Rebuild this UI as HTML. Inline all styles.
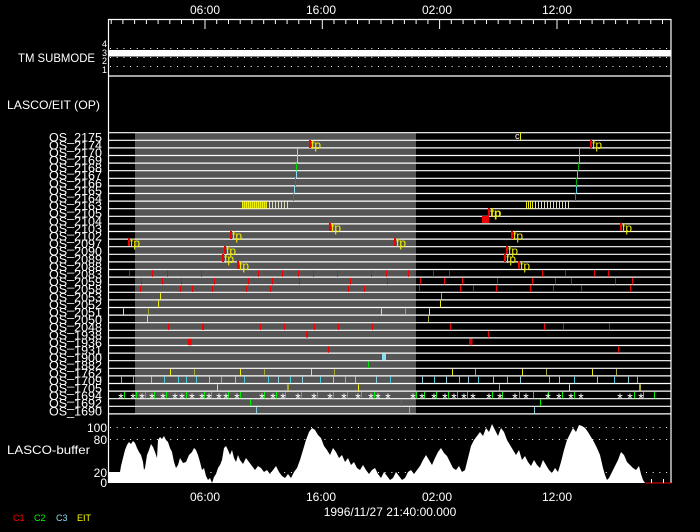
<!DOCTYPE html>
<html><head><meta charset="utf-8"><style>
html,body{margin:0;padding:0;background:#000;}
svg{display:block;font-family:"Liberation Sans",sans-serif;}
</style></head><body>
<svg width="700" height="532" viewBox="0 0 700 532" xmlns="http://www.w3.org/2000/svg">
<rect width="700" height="532" fill="#000"/>
<rect x="135" y="132.7" width="281" height="281" fill="#555"/>
<line x1="108.5" y1="19" x2="108.5" y2="483" stroke="#fff" stroke-width="1.2"/>
<line x1="671" y1="19" x2="671" y2="483" stroke="#fff" stroke-width="1.2"/>
<line x1="108" y1="19.5" x2="671" y2="19.5" stroke="#fff" stroke-width="1.2"/>
<line x1="108" y1="76" x2="671" y2="76" stroke="#fff" stroke-width="1.2"/>
<g stroke="#fff" stroke-width="1">
<line x1="111.2" y1="19" x2="111.2" y2="24"/><line x1="122.9" y1="19" x2="122.9" y2="24"/><line x1="134.6" y1="19" x2="134.6" y2="24"/><line x1="146.4" y1="19" x2="146.4" y2="24"/><line x1="158.1" y1="19" x2="158.1" y2="24"/><line x1="169.8" y1="19" x2="169.8" y2="24"/><line x1="181.5" y1="19" x2="181.5" y2="24"/><line x1="193.3" y1="19" x2="193.3" y2="24"/><line x1="205" y1="19" x2="205" y2="29"/><line x1="216.7" y1="19" x2="216.7" y2="24"/><line x1="228.5" y1="19" x2="228.5" y2="24"/><line x1="240.2" y1="19" x2="240.2" y2="24"/><line x1="251.9" y1="19" x2="251.9" y2="24"/><line x1="263.7" y1="19" x2="263.7" y2="24"/><line x1="275.4" y1="19" x2="275.4" y2="24"/><line x1="287.1" y1="19" x2="287.1" y2="24"/><line x1="298.8" y1="19" x2="298.8" y2="24"/><line x1="310.6" y1="19" x2="310.6" y2="24"/><line x1="322.3" y1="19" x2="322.3" y2="29"/><line x1="334" y1="19" x2="334" y2="24"/><line x1="345.8" y1="19" x2="345.8" y2="24"/><line x1="357.5" y1="19" x2="357.5" y2="24"/><line x1="369.2" y1="19" x2="369.2" y2="24"/><line x1="381" y1="19" x2="381" y2="24"/><line x1="392.7" y1="19" x2="392.7" y2="24"/><line x1="404.4" y1="19" x2="404.4" y2="24"/><line x1="416.1" y1="19" x2="416.1" y2="24"/><line x1="427.9" y1="19" x2="427.9" y2="24"/><line x1="439.6" y1="19" x2="439.6" y2="29"/><line x1="451.3" y1="19" x2="451.3" y2="24"/><line x1="463.1" y1="19" x2="463.1" y2="24"/><line x1="474.8" y1="19" x2="474.8" y2="24"/><line x1="486.5" y1="19" x2="486.5" y2="24"/><line x1="498.2" y1="19" x2="498.2" y2="24"/><line x1="510" y1="19" x2="510" y2="24"/><line x1="521.7" y1="19" x2="521.7" y2="24"/><line x1="533.4" y1="19" x2="533.4" y2="24"/><line x1="545.2" y1="19" x2="545.2" y2="24"/><line x1="557" y1="19" x2="557" y2="29"/><line x1="568.6" y1="19" x2="568.6" y2="24"/><line x1="580.4" y1="19" x2="580.4" y2="24"/><line x1="592.1" y1="19" x2="592.1" y2="24"/><line x1="603.8" y1="19" x2="603.8" y2="24"/><line x1="615.6" y1="19" x2="615.6" y2="24"/><line x1="627.3" y1="19" x2="627.3" y2="24"/><line x1="639" y1="19" x2="639" y2="24"/><line x1="650.8" y1="19" x2="650.8" y2="24"/><line x1="662.5" y1="19" x2="662.5" y2="24"/>
</g>
<g stroke="#fff" stroke-width="1" stroke-dasharray="1 5.7">
<line x1="110" y1="48.5" x2="671" y2="48.5"/><line x1="110" y1="57.5" x2="671" y2="57.5"/><line x1="110" y1="66.5" x2="671" y2="66.5"/>
</g>
<rect x="108" y="50" width="563" height="6.5" fill="#fff"/>
<g fill="#fff" font-size="9" text-anchor="end">
<text x="107" y="47">4</text><text x="107" y="56">3</text><text x="107" y="64">2</text><text x="107" y="73">1</text>
</g>
<text x="95" y="62" fill="#fff" font-size="12" text-anchor="end" textLength="77" lengthAdjust="spacingAndGlyphs">TM SUBMODE</text>
<text x="100" y="109" fill="#fff" font-size="12" text-anchor="end" textLength="93" lengthAdjust="spacingAndGlyphs">LASCO/EIT (OP)</text>
<g fill="#fff" font-size="12" text-anchor="middle">
<text x="205" y="14">06:00</text><text x="321" y="14">16:00</text><text x="437" y="14">02:00</text><text x="557" y="14">12:00</text>
<text x="205" y="501">06:00</text><text x="321" y="501">16:00</text><text x="437" y="501">02:00</text><text x="557" y="501">12:00</text>
<text x="390" y="516">1996/11/27 21:40:00.000</text>
</g>
<g font-size="9">
<text x="13" y="521" fill="#f00">C1</text><text x="34" y="521" fill="#0f0">C2</text><text x="56" y="521" fill="#8de">C3</text><text x="77" y="521" fill="#ff0">EIT</text>
</g>
<g stroke="#fff" stroke-width="1.2">
<line x1="108" x2="671" y1="132.7" y2="132.7"/><line x1="108" x2="671" y1="140.3" y2="140.3"/><line x1="108" x2="671" y1="147.9" y2="147.9"/><line x1="108" x2="671" y1="155.5" y2="155.5"/><line x1="108" x2="671" y1="163.1" y2="163.1"/><line x1="108" x2="671" y1="170.7" y2="170.7"/><line x1="108" x2="671" y1="178.3" y2="178.3"/><line x1="108" x2="671" y1="185.9" y2="185.9"/><line x1="108" x2="671" y1="193.5" y2="193.5"/><line x1="108" x2="671" y1="201.1" y2="201.1"/><line x1="108" x2="671" y1="208.7" y2="208.7"/><line x1="108" x2="671" y1="216.3" y2="216.3"/><line x1="108" x2="671" y1="223.9" y2="223.9"/><line x1="108" x2="671" y1="231.5" y2="231.5"/><line x1="108" x2="671" y1="239.1" y2="239.1"/><line x1="108" x2="671" y1="246.7" y2="246.7"/><line x1="108" x2="671" y1="254.3" y2="254.3"/><line x1="108" x2="671" y1="261.9" y2="261.9"/><line x1="108" x2="671" y1="269.5" y2="269.5"/><line x1="108" x2="671" y1="277.1" y2="277.1"/><line x1="108" x2="671" y1="284.7" y2="284.7"/><line x1="108" x2="671" y1="292.3" y2="292.3"/><line x1="108" x2="671" y1="299.9" y2="299.9"/><line x1="108" x2="671" y1="307.5" y2="307.5"/><line x1="108" x2="671" y1="315.1" y2="315.1"/><line x1="108" x2="671" y1="322.7" y2="322.7"/><line x1="108" x2="671" y1="330.3" y2="330.3"/><line x1="108" x2="671" y1="337.9" y2="337.9"/><line x1="108" x2="671" y1="345.5" y2="345.5"/><line x1="108" x2="671" y1="353.1" y2="353.1"/><line x1="108" x2="671" y1="360.7" y2="360.7"/><line x1="108" x2="671" y1="368.3" y2="368.3"/><line x1="108" x2="671" y1="375.9" y2="375.9"/><line x1="108" x2="671" y1="383.5" y2="383.5"/><line x1="108" x2="671" y1="391.1" y2="391.1"/><line x1="108" x2="671" y1="398.7" y2="398.7"/><line x1="108" x2="671" y1="406.3" y2="406.3"/><line x1="108" x2="671" y1="413.9" y2="413.9"/>
</g>
<g fill="#fff" font-size="12" text-anchor="end">
<text x="102" y="141.7" textLength="53" lengthAdjust="spacingAndGlyphs">OS_2175</text>
<text x="102" y="149.3" textLength="53" lengthAdjust="spacingAndGlyphs">OS_2174</text>
<text x="102" y="156.9" textLength="53" lengthAdjust="spacingAndGlyphs">OS_2170</text>
<text x="102" y="164.5" textLength="53" lengthAdjust="spacingAndGlyphs">OS_2169</text>
<text x="102" y="172.1" textLength="53" lengthAdjust="spacingAndGlyphs">OS_2168</text>
<text x="102" y="179.7" textLength="53" lengthAdjust="spacingAndGlyphs">OS_2167</text>
<text x="102" y="187.3" textLength="53" lengthAdjust="spacingAndGlyphs">OS_2166</text>
<text x="102" y="194.9" textLength="53" lengthAdjust="spacingAndGlyphs">OS_2165</text>
<text x="102" y="202.5" textLength="53" lengthAdjust="spacingAndGlyphs">OS_2164</text>
<text x="102" y="210.1" textLength="53" lengthAdjust="spacingAndGlyphs">OS_2163</text>
<text x="102" y="217.7" textLength="53" lengthAdjust="spacingAndGlyphs">OS_2105</text>
<text x="102" y="225.3" textLength="53" lengthAdjust="spacingAndGlyphs">OS_2104</text>
<text x="102" y="232.9" textLength="53" lengthAdjust="spacingAndGlyphs">OS_2103</text>
<text x="102" y="240.5" textLength="53" lengthAdjust="spacingAndGlyphs">OS_2102</text>
<text x="102" y="248.1" textLength="53" lengthAdjust="spacingAndGlyphs">OS_2097</text>
<text x="102" y="255.7" textLength="53" lengthAdjust="spacingAndGlyphs">OS_2090</text>
<text x="102" y="263.3" textLength="53" lengthAdjust="spacingAndGlyphs">OS_2089</text>
<text x="102" y="270.9" textLength="53" lengthAdjust="spacingAndGlyphs">OS_2088</text>
<text x="102" y="278.5" textLength="53" lengthAdjust="spacingAndGlyphs">OS_2083</text>
<text x="102" y="286.1" textLength="53" lengthAdjust="spacingAndGlyphs">OS_2059</text>
<text x="102" y="293.7" textLength="53" lengthAdjust="spacingAndGlyphs">OS_2058</text>
<text x="102" y="301.3" textLength="53" lengthAdjust="spacingAndGlyphs">OS_2053</text>
<text x="102" y="308.9" textLength="53" lengthAdjust="spacingAndGlyphs">OS_2052</text>
<text x="102" y="316.5" textLength="53" lengthAdjust="spacingAndGlyphs">OS_2051</text>
<text x="102" y="324.1" textLength="53" lengthAdjust="spacingAndGlyphs">OS_2050</text>
<text x="102" y="331.7" textLength="53" lengthAdjust="spacingAndGlyphs">OS_2048</text>
<text x="102" y="339.3" textLength="53" lengthAdjust="spacingAndGlyphs">OS_1938</text>
<text x="102" y="346.9" textLength="53" lengthAdjust="spacingAndGlyphs">OS_1936</text>
<text x="102" y="354.5" textLength="53" lengthAdjust="spacingAndGlyphs">OS_1931</text>
<text x="102" y="362.1" textLength="53" lengthAdjust="spacingAndGlyphs">OS_1900</text>
<text x="102" y="369.7" textLength="53" lengthAdjust="spacingAndGlyphs">OS_1882</text>
<text x="102" y="377.3" textLength="53" lengthAdjust="spacingAndGlyphs">OS_1762</text>
<text x="102" y="384.9" textLength="53" lengthAdjust="spacingAndGlyphs">OS_1709</text>
<text x="102" y="392.5" textLength="53" lengthAdjust="spacingAndGlyphs">OS_1705</text>
<text x="102" y="400.1" textLength="53" lengthAdjust="spacingAndGlyphs">OS_1694</text>
<text x="102" y="407.7" textLength="53" lengthAdjust="spacingAndGlyphs">OS_1692</text>
<text x="102" y="415.3" textLength="53" lengthAdjust="spacingAndGlyphs">OS_1690</text>
</g>
<g fill="#e00">
<g transform="translate(0,270.3)"><rect x="129" width="1" height="6.5"/><rect x="152" width="1" height="6.5"/><rect x="167" width="1" height="6.5"/><rect x="201" width="1" height="6.5"/><rect x="258" width="1" height="6.5"/><rect x="282" width="1" height="6.5"/><rect x="298" width="1" height="6.5"/><rect x="313" width="1" height="6.5"/><rect x="337" width="1" height="6.5"/><rect x="371" width="1" height="6.5"/><rect x="386" width="1" height="6.5"/><rect x="408" width="1" height="6.5"/><rect x="433" width="1" height="6.5"/><rect x="449" width="1" height="6.5"/><rect x="542" width="1" height="6.5"/><rect x="565" width="1" height="6.5"/><rect x="594" width="1" height="6.5"/><rect x="608" width="1" height="6.5"/></g>
<g transform="translate(0,277.9)"><rect x="141" width="1" height="6.5"/><rect x="162" width="1" height="6.5"/><rect x="181" width="1" height="6.5"/><rect x="214" width="1" height="6.5"/><rect x="248" width="1" height="6.5"/><rect x="272" width="1" height="6.5"/><rect x="299" width="1" height="6.5"/><rect x="350" width="1" height="6.5"/><rect x="387" width="1" height="6.5"/><rect x="420" width="1" height="6.5"/><rect x="444" width="1" height="6.5"/><rect x="462" width="1" height="6.5"/><rect x="497" width="1" height="6.5"/><rect x="532" width="1" height="6.5"/><rect x="555" width="1" height="6.5"/><rect x="571" width="1" height="6.5"/><rect x="615" width="1" height="6.5"/><rect x="632" width="1" height="6.5"/></g>
<g transform="translate(0,285.5)"><rect x="140" width="1" height="6.5"/><rect x="180" width="1" height="6.5"/><rect x="192" width="1" height="6.5"/><rect x="212" width="1" height="6.5"/><rect x="246" width="1" height="6.5"/><rect x="270" width="1" height="6.5"/><rect x="348" width="1" height="6.5"/><rect x="364" width="1" height="6.5"/><rect x="419" width="1" height="6.5"/><rect x="460" width="1" height="6.5"/><rect x="473" width="1" height="6.5"/><rect x="496" width="1" height="6.5"/><rect x="530" width="1" height="6.5"/><rect x="553" width="1" height="6.5"/><rect x="581" width="1" height="6.5"/><rect x="630" width="1" height="6.5"/></g>
<g transform="translate(0,323.5)"><rect x="168" width="1" height="6.5"/><rect x="202" width="2" height="6.5"/><rect x="260" width="1" height="6.5"/><rect x="284" width="1" height="6.5"/><rect x="314" width="1" height="6.5"/><rect x="338" width="1" height="6.5"/><rect x="372" width="1" height="6.5"/><rect x="450" width="1" height="6.5"/><rect x="544" width="1" height="6.5"/><rect x="563" width="1" height="6.5"/><rect x="609" width="1" height="6.5"/></g>
<rect x="306" y="331.1" width="2" height="6.5"/><rect x="488" y="331.1" width="1" height="6.5"/>
<rect x="188" y="338.7" width="3.5" height="6.5"/><rect x="469" y="338.7" width="3.5" height="6.5" fill="#c00"/>
<rect x="328" y="346.3" width="1" height="6.5"/><rect x="618" y="346.3" width="1" height="6.5"/>
<rect x="482" y="216" width="7" height="7"/>
</g>
<g fill="#ee0">
<rect x="160" y="293.1" width="1" height="6.5"/><rect x="441" y="293.1" width="1" height="6.5" fill="#aa3"/>
<rect x="158" y="300.7" width="1" height="6.5"/><rect x="440" y="300.7" width="1" height="6.5"/>
<rect x="123" y="308.3" width="1" height="6.5"/><rect x="148" y="308.3" width="1" height="6.5" fill="#aa3"/><rect x="381" y="308.3" width="1" height="6.5"/><rect x="405" y="308.3" width="1" height="6.5" fill="#aa3"/><rect x="429" y="308.3" width="1" height="6.5"/>
<rect x="147" y="315.9" width="1" height="6.5"/><rect x="428" y="315.9" width="1" height="6.5" fill="#aa3"/>
<g transform="translate(0,369.1)"><rect x="170" width="1" height="6.5"/><rect x="194" width="1" height="6.5" fill="#aa3"/><rect x="240" width="1" height="6.5"/><rect x="264" width="1" height="6.5" fill="#aa3"/><rect x="311" width="1" height="6.5"/><rect x="334" width="1" height="6.5" fill="#aa3"/><rect x="452" width="1" height="6.5"/><rect x="475" width="1" height="6.5" fill="#aa3"/><rect x="522" width="1" height="6.5"/><rect x="546" width="1" height="6.5" fill="#aa3"/><rect x="592" width="1" height="6.5"/><rect x="616" width="1" height="6.5" fill="#aa3"/></g>
<g transform="translate(0,384.3)"><rect x="217" width="1" height="6.5"/><rect x="287" width="2" height="6.5" fill="#aa3"/><rect x="358" width="1" height="6.5"/><rect x="499" width="1" height="6.5" fill="#aa3"/><rect x="569" width="1" height="6.5"/><rect x="639" width="2" height="6.5" fill="#aa3"/></g>
<rect x="520" y="132" width="1" height="8"/>
</g>
<g fill="#4cd" transform="translate(0,376.7)">
<rect x="121" width="1" height="6.5"/><rect x="133" width="1" height="6.5"/><rect x="151" width="1" height="6.5" fill="#8cd"/><rect x="164" width="1" height="6.5"/><rect x="178" width="1" height="6.5"/><rect x="186" width="1" height="6.5"/><rect x="196" width="1" height="6.5"/><rect x="209" width="1" height="6.5" fill="#8cd"/><rect x="221" width="1" height="6.5"/><rect x="235" width="1" height="6.5" fill="#8cd"/><rect x="244" width="1" height="6.5"/><rect x="268" width="1" height="6.5"/><rect x="278" width="1" height="6.5" fill="#8cd"/><rect x="290" width="1" height="6.5"/><rect x="302" width="1" height="6.5" fill="#8cd"/><rect x="320" width="1" height="6.5"/><rect x="333" width="1" height="6.5" fill="#8cd"/><rect x="345" width="1" height="6.5"/><rect x="355" width="1" height="6.5" fill="#8cd"/><rect x="376" width="1" height="6.5" fill="#8cd"/><rect x="390" width="1" height="6.5"/><rect x="422" width="1" height="6.5" fill="#8cd"/><rect x="434" width="1" height="6.5"/><rect x="446" width="1" height="6.5" fill="#8cd"/><rect x="459" width="1" height="6.5"/><rect x="468" width="1" height="6.5" fill="#8cd"/><rect x="478" width="1" height="6.5"/><rect x="493" width="1" height="6.5" fill="#8cd"/><rect x="507" width="1" height="6.5"/><rect x="520" width="1" height="6.5" fill="#8cd"/><rect x="549" width="1" height="6.5"/><rect x="559" width="1" height="6.5" fill="#8cd"/><rect x="574" width="1" height="6.5"/><rect x="597" width="1" height="6.5" fill="#8cd"/><rect x="614" width="1" height="6.5"/><rect x="628" width="1" height="6.5" fill="#8cd"/><rect x="637" width="1" height="6.5"/>
</g>
<rect x="382" y="353.9" width="4" height="6.5" fill="#8de"/>
<rect x="368" y="361.5" width="1" height="6.5" fill="#0d0"/>
<g fill="#0e0" transform="translate(0,391.9)">
<rect x="124" width="1" height="6.5"/><rect x="136" width="1" height="6.5"/><rect x="145" width="1" height="6.5"/><rect x="154" width="1" height="6.5"/><rect x="166" width="1" height="6.5"/><rect x="186" width="1" height="6.5"/><rect x="204" width="1" height="6.5"/><rect x="211" width="1" height="6.5"/><rect x="228" width="1" height="6.5"/><rect x="240" width="1" height="6.5"/><rect x="264" width="1" height="6.5"/><rect x="276" width="1" height="6.5"/><rect x="285" width="1" height="6.5"/><rect x="301" width="1" height="6.5"/><rect x="317" width="1" height="6.5"/><rect x="333" width="1" height="6.5"/><rect x="347" width="1" height="6.5"/><rect x="361" width="1" height="6.5"/><rect x="374" width="1" height="6.5"/><rect x="416" width="1" height="6.5"/><rect x="424" width="1" height="6.5"/><rect x="436" width="1" height="6.5"/><rect x="448" width="1" height="6.5"/><rect x="457" width="1" height="6.5"/><rect x="467" width="1" height="6.5"/><rect x="492" width="1" height="6.5"/><rect x="502" width="1" height="6.5"/><rect x="519" width="1" height="6.5"/><rect x="533" width="1" height="6.5"/><rect x="548" width="1" height="6.5"/><rect x="562" width="1" height="6.5"/><rect x="574" width="1" height="6.5"/><rect x="634" width="1" height="6.5"/><rect x="643" width="1" height="6.5"/><rect x="654" width="1" height="6.5"/>
</g>
<g fill="#fff" font-size="14" text-anchor="middle">
<text x="121" y="403">*</text><text x="133" y="403">*</text><text x="142" y="403">*</text><text x="152" y="403">*</text><text x="163" y="403">*</text><text x="175" y="403">*</text><text x="182" y="403">*</text><text x="192" y="403">*</text><text x="202" y="403">*</text><text x="209" y="403">*</text><text x="219" y="403">*</text><text x="226" y="403">*</text><text x="237" y="403">*</text><text x="262" y="403">*</text><text x="273" y="403">*</text><text x="283" y="403">*</text><text x="298" y="403">*</text><text x="314" y="403">*</text><text x="330" y="403">*</text><text x="344" y="403">*</text><text x="358" y="403">*</text><text x="371" y="403">*</text><text x="378" y="403">*</text><text x="388" y="403">*</text><text x="413" y="403">*</text><text x="422" y="403">*</text><text x="434" y="403">*</text><text x="445" y="403">*</text><text x="454" y="403">*</text><text x="464" y="403">*</text><text x="473" y="403">*</text><text x="489" y="403">*</text><text x="500" y="403">*</text><text x="515" y="403">*</text><text x="526" y="403">*</text><text x="548" y="403">*</text><text x="559" y="403">*</text><text x="571" y="403">*</text><text x="581" y="403">*</text><text x="620" y="403">*</text><text x="630" y="403">*</text><text x="641" y="403">*</text>
</g>
<rect x="250" y="399.5" width="1" height="6.5" fill="#0e0"/><rect x="401" y="399.5" width="1" height="6.5" fill="#0a0"/><rect x="540" y="399.5" width="1" height="6.5" fill="#0e0"/>
<rect x="256" y="407.1" width="1" height="6.5" fill="#8cd"/><rect x="409" y="407.1" width="1" height="6.5" fill="#4cd"/><rect x="534" y="407.1" width="1" height="6.5" fill="#8cd"/>
<g stroke-width="1">
<line x1="297.5" y1="148" x2="297.5" y2="163" stroke="#8de"/><line x1="296.5" y1="163" x2="296.5" y2="170.5" stroke="#0d0"/><line x1="296.5" y1="170.5" x2="296.5" y2="178" stroke="#8de"/><line x1="295.5" y1="178" x2="295.5" y2="186" stroke="#0a0"/><line x1="294.5" y1="186" x2="294.5" y2="193.5" stroke="#8de"/><line x1="293.5" y1="193.5" x2="293.5" y2="201" stroke="#0a0"/>
<line x1="579.5" y1="148" x2="579.5" y2="163" stroke="#4cd"/><line x1="578.5" y1="163" x2="578.5" y2="170.5" stroke="#0a0"/><line x1="577.5" y1="170.5" x2="577.5" y2="178" stroke="#4cd"/><line x1="576.5" y1="178" x2="576.5" y2="186" stroke="#0a0"/><line x1="576.5" y1="186" x2="576.5" y2="193.5" stroke="#4cd"/><line x1="575.5" y1="193.5" x2="575.5" y2="201" stroke="#0a0"/>
</g>
<rect x="242" y="201.5" width="25" height="6.8" fill="#ee0" opacity="0.55"/>
<g stroke="#ee0" stroke-width="1"><path d="M242.5 201.5v7M244.5 201.5v7M246.5 201.5v7M248.5 201.5v7M250.5 201.5v7M252.5 201.5v7M254.5 201.5v7M256.5 201.5v7M258.5 201.5v7M260.5 201.5v7M262.5 201.5v7M264.5 201.5v7M266.5 201.5v7"/></g>
<g stroke="#ddb" stroke-width="1"><path d="M269.5 201.5v7M272.5 201.5v7M275.5 201.5v7M278.5 201.5v7M281.5 201.5v7M284.5 201.5v7M287.5 201.5v7"/></g>
<g stroke="#ee0" stroke-width="1"><path d="M526.5 201.5v7M528.5 201.5v7M530.5 201.5v7M532.5 201.5v7"/></g>
<g stroke="#ddb" stroke-width="1"><path d="M535.5 201.5v7M538.5 201.5v7M541.5 201.5v7M544.5 201.5v7M547.5 201.5v7M550.5 201.5v7M553.5 201.5v7M556.5 201.5v7M559.5 201.5v7M562.5 201.5v7M565.5 201.5v7M568.5 201.5v7"/></g>
<g font-size="12" fill="#ee0">
<rect x="309" y="140" width="2" height="8" fill="#e00"/><text x="311" y="149">fp</text>
<rect x="590" y="140" width="2" height="8" fill="#e00"/><text x="592" y="149">fp</text>
<rect x="329" y="223" width="2" height="8" fill="#e00"/><text x="331" y="232">fp</text>
<rect x="488" y="208" width="2" height="8" fill="#e00"/><text x="490" y="217" font-weight="bold">fp</text>
<rect x="620" y="223" width="2" height="8" fill="#e00"/><text x="622" y="232">fp</text>
<rect x="230" y="231" width="2" height="8" fill="#e00"/><text x="232" y="240">fp</text>
<rect x="511" y="231" width="2" height="8" fill="#e00"/><text x="513" y="240">fp</text>
<rect x="128" y="238" width="2" height="8" fill="#e00"/><text x="130" y="247">fp</text>
<rect x="394" y="238" width="2" height="8" fill="#e00"/><text x="396" y="247">fp</text>
<rect x="224" y="246" width="2" height="8" fill="#e00"/><text x="226" y="255">fp</text>
<rect x="506" y="246" width="2" height="8" fill="#e00"/><text x="508" y="255">fp</text>
<rect x="222" y="254" width="2" height="8" fill="#e00"/><text x="224" y="263">fp</text>
<rect x="504" y="254" width="2" height="8" fill="#e00"/><text x="506" y="263">fp</text>
<rect x="237" y="261" width="2" height="8" fill="#e00"/><text x="239" y="270">fp</text>
<rect x="518" y="261" width="2" height="8" fill="#e00"/><text x="520" y="270">fp</text>
</g>
<text x="515" y="139" fill="#fff" font-size="9">c</text>
<g stroke="#fff" stroke-width="1" stroke-dasharray="1 5.7">
<line x1="110" y1="427.5" x2="671" y2="427.5"/><line x1="110" y1="439.5" x2="671" y2="439.5"/><line x1="110" y1="472.5" x2="671" y2="472.5"/>
</g>
<polygon fill="#fff" points="108,483 108,472 120,472 121,466 123,458 125,450 127,445 129,442 131,444 133,441 135,443 137,448 139,452 141,455 143,462 144,470 145,468 147,455 149,450 151,444 153,447 155,452 157,458 158,440 160,437 162,439 164,436 166,440 168,442 170,448 172,452 174,462 176,468 178,465 180,458 183,463 186,462 189,455 192,452 194,448 196,450 198,455 200,462 202,470 204,468 206,476 208,480 210,478 212,483 214,477 216,474 218,468 220,465 222,460 224,448 226,446 228,450 230,455 232,450 234,458 236,462 238,455 240,460 243,464 246,458 249,462 252,466 255,470 258,466 261,468 264,472 267,470 270,474 273,470 276,466 279,472 282,476 285,478 288,474 291,478 294,472 297,468 300,460 303,450 306,440 309,432 312,428 315,430 318,435 321,438 324,446 327,450 330,455 333,448 336,452 339,458 342,455 345,462 348,458 351,465 354,462 357,468 360,470 363,465 366,470 369,474 372,470 375,468 378,474 381,478 384,472 387,476 390,480 393,478 396,472 399,476 402,480 405,478 408,472 411,470 414,474 417,470 420,466 423,460 426,455 429,460 432,465 435,458 438,452 441,448 444,453 447,456 450,462 453,468 456,470 459,466 462,472 465,470 468,458 471,446 474,440 477,436 480,432 483,436 486,428 489,432 492,424 495,430 498,436 501,428 504,432 507,440 510,445 513,450 516,455 519,450 522,460 525,456 528,462 531,466 534,460 537,465 540,468 543,460 546,465 549,470 552,473 555,468 558,472 561,462 564,450 567,440 570,434 573,428 576,432 579,425 582,426 585,428 588,432 591,437 594,442 597,448 600,455 603,468 605,475 607,480 609,478 612,472 615,466 618,460 621,452 624,455 627,462 630,465 633,468 636,470 639,466 641,474 643,480 645,483"/>
<line x1="645" y1="483" x2="671" y2="483" stroke="#e00" stroke-width="1"/>
<g stroke="#fff"><line x1="651.5" y1="479" x2="651.5" y2="483"/><line x1="663.5" y1="479" x2="663.5" y2="483"/></g>
<g fill="#fff" font-size="12" text-anchor="end">
<text x="107" y="432">100</text><text x="107" y="444">80</text><text x="107" y="477">20</text><text x="107" y="487">0</text>
</g>
<text x="7" y="454" fill="#fff" font-size="12" textLength="83" lengthAdjust="spacingAndGlyphs">LASCO-buffer</text>
</svg>
</body></html>
